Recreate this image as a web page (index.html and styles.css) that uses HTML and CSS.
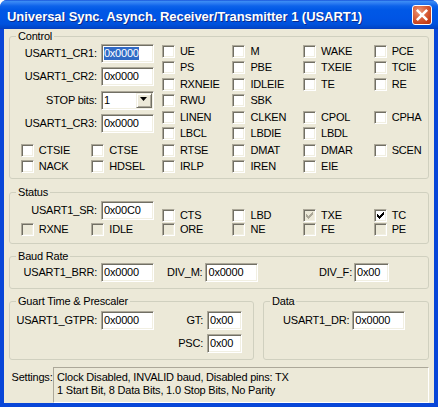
FILE: index.html
```html
<!DOCTYPE html>
<html>
<head>
<meta charset="utf-8">
<title>USART1</title>
<link rel="stylesheet" href="styles.css">
</head>
<body>
<div class="window">
  <div class="titlebar">
    <div class="title">Universal Sync. Asynch. Receiver/Transmitter 1 (USART1)</div>
    <div class="close"><svg width="20" height="20" viewBox="0 0 20 20"><path d="M5.8 5.8L14.2 14.2M14.2 5.8L5.8 14.2" stroke="#fff" stroke-width="2.6" stroke-linecap="square"/></svg></div>
  </div>
  <div class="client">
    <fieldset class="group control">
      <legend>Control</legend>
      <div class="cgrid">
        <div class="regs">
          <div class="reg"><span class="lbl">USART1_CR1:</span><span class="edit"><span class="sel">0x0000</span></span></div>
          <div class="reg"><span class="lbl">USART1_CR2:</span><span class="edit">0x0000</span></div>
          <div class="reg"><span class="lbl">STOP bits:</span><span class="edit combo"><span>1</span><span class="dd"><svg width="7" height="4" viewBox="0 0 7 4"><path d="M0 0h7L3.5 4z" fill="#000"/></svg></span></span></div>
          <div class="reg"><span class="lbl">USART1_CR3:</span><span class="edit">0x0000</span></div>
        </div>
        <div class="chk"><span class="cb"></span>UE</div>
        <div class="chk"><span class="cb"></span>M</div>
        <div class="chk"><span class="cb"></span>WAKE</div>
        <div class="chk"><span class="cb"></span>PCE</div>
        <div class="chk"><span class="cb"></span>PS</div>
        <div class="chk"><span class="cb"></span>PBE</div>
        <div class="chk"><span class="cb"></span>TXEIE</div>
        <div class="chk"><span class="cb"></span>TCIE</div>
        <div class="chk"><span class="cb"></span>RXNEIE</div>
        <div class="chk"><span class="cb"></span>IDLEIE</div>
        <div class="chk"><span class="cb"></span>TE</div>
        <div class="chk"><span class="cb"></span>RE</div>
        <div class="chk"><span class="cb"></span>RWU</div>
        <div class="chk"><span class="cb"></span>SBK</div>
        <div></div>
        <div></div>
        <div class="chk"><span class="cb"></span>LINEN</div>
        <div class="chk"><span class="cb"></span>CLKEN</div>
        <div class="chk"><span class="cb"></span>CPOL</div>
        <div class="chk"><span class="cb"></span>CPHA</div>
        <div class="chk"><span class="cb"></span>LBCL</div>
        <div class="chk"><span class="cb"></span>LBDIE</div>
        <div class="chk"><span class="cb"></span>LBDL</div>
        <div></div>
        <div class="chk"><span class="cb"></span>CTSIE</div>
        <div class="chk"><span class="cb"></span>CTSE</div>
        <div class="chk"><span class="cb"></span>RTSE</div>
        <div class="chk"><span class="cb"></span>DMAT</div>
        <div class="chk"><span class="cb"></span>DMAR</div>
        <div class="chk"><span class="cb"></span>SCEN</div>
        <div class="chk"><span class="cb"></span>NACK</div>
        <div class="chk"><span class="cb"></span>HDSEL</div>
        <div class="chk"><span class="cb"></span>IRLP</div>
        <div class="chk"><span class="cb"></span>IREN</div>
        <div class="chk"><span class="cb"></span>EIE</div>
      </div>
    </fieldset>

    <fieldset class="group status">
      <legend>Status</legend>
      <div class="sgrid">
        <div class="sreg"><span class="lbl">USART1_SR:</span><span class="edit">0x00C0</span></div>
        <div class="chk top"><span class="cb"></span>CTS</div>
        <div class="chk top"><span class="cb"></span>LBD</div>
        <div class="chk top"><span class="cb dis"><svg class="tick grey" width="7" height="7" viewBox="0 0 7 7"><path d="M6 0h1v1h-1zM5 1h2v1h-2zM0 2h1v1h-1zM4 2h3v1h-3zM0 3h2v1h-2zM3 3h3v1h-3zM0 4h5v1h-5zM1 5h3v1h-3zM2 6h1v1h-1z"/></svg></span>TXE</div>
        <div class="chk top"><span class="cb"><svg class="tick" width="7" height="7" viewBox="0 0 7 7"><path d="M6 0h1v1h-1zM5 1h2v1h-2zM0 2h1v1h-1zM4 2h3v1h-3zM0 3h2v1h-2zM3 3h3v1h-3zM0 4h5v1h-5zM1 5h3v1h-3zM2 6h1v1h-1z"/></svg></span>TC</div>
        <div class="chk"><span class="cb dis"></span>RXNE</div>
        <div class="chk"><span class="cb dis"></span>IDLE</div>
        <div class="chk"><span class="cb dis"></span>ORE</div>
        <div class="chk"><span class="cb dis"></span>NE</div>
        <div class="chk"><span class="cb dis"></span>FE</div>
        <div class="chk"><span class="cb dis"></span>PE</div>
      </div>
    </fieldset>

    <fieldset class="group baud">
      <legend>Baud Rate</legend>
      <div class="bbody">
        <span class="lbl wide">USART1_BRR:</span><span class="edit">0x0000</span>
        <span class="lbl divm">DIV_M:</span><span class="edit">0x0000</span>
        <span class="lbl divf">DIV_F:</span><span class="edit narrow">0x00</span>
      </div>
    </fieldset>

    <div class="pair">
      <fieldset class="group guart">
        <legend>Guart Time &amp; Prescaler</legend>
        <div class="ggrid">
          <span class="glbl">USART1_GTPR:</span><span class="edit">0x0000</span>
          <span class="glbl">GT:</span><span class="edit narrow">0x00</span>
          <span></span><span></span>
          <span class="glbl">PSC:</span><span class="edit narrow">0x00</span>
        </div>
      </fieldset>
      <fieldset class="group data">
        <legend>Data</legend>
        <div class="dbody"><span class="lbl">USART1_DR:</span><span class="edit">0x0000</span></div>
      </fieldset>
    </div>

    <div class="settings">
      <div class="slbl">Settings:</div>
      <div class="sbox">Clock Disabled, INVALID baud, Disabled pins: TX<br>1 Start Bit, 8 Data Bits, 1.0 Stop Bits, No Parity</div>
    </div>
  </div>
</div>
</body>
</html>
```

FILE: styles.css
```css
* { box-sizing: border-box; }
html, body { margin: 0; padding: 0; background: #ffffff; }
body {
  font-family: "Liberation Sans", Arial, sans-serif;
  font-size: 11px;
  line-height: 13px;
  letter-spacing: -0.2px;
  color: #000;
}
.window {
  width: 438px;
  height: 407px;
  display: flex;
  flex-direction: column;
  background: #0846d8;
  border-radius: 7px 7px 0 0;
  overflow: hidden;
}
.titlebar {
  flex: none;
  height: 29px;
  display: flex;
  align-items: flex-start;
  background: linear-gradient(to bottom, #0a3dd0 0px, #3d8ff5 1px, #2f7ef2 3px, #0d63ea 6px, #0058e6 10px, #0055e5 18px, #0052dd 24px, #0045c8 28px, #0a3bb8 29px);
}
.title {
  flex: 1;
  padding: 9px 0 0 7px;
  font-size: 13px;
  line-height: 15px;
  font-weight: bold;
  letter-spacing: -0.05px;
  color: #fff;
  text-shadow: 1px 1px 0 #0a2a8c;
  white-space: nowrap;
}
.close {
  flex: none;
  width: 20px;
  height: 20px;
  margin: 5px 6px 0 0;
  border: 1px solid #fff;
  border-radius: 3px;
  background: radial-gradient(circle at 35% 30%, #ec9a7c 0%, #dd6a45 35%, #c8401a 75%, #b83510 100%);
  display: flex;
  align-items: center;
  justify-content: center;
}
.close svg { display: block; margin: -1px; }
.client {
  flex: 1;
  margin: 0 4px 4px 4px;
  padding: 1px 5px 0 5px;
  background: #ece9d8;
  overflow: hidden;
}
.group {
  margin: 0;
  padding: 0;
  min-width: 0;
  border: 1px solid #d0d0bf;
  border-radius: 3px;
}
.group > legend {
  margin-left: 6px;
  padding: 0 2px;
  line-height: 13px;
}
.chk {
  display: flex;
  align-items: center;
  gap: 5px;
  white-space: nowrap;
}
.cb {
  flex: none;
  width: 13px;
  height: 13px;
  background: #fff;
  border: 1px solid;
  border-color: #aca899 #ffffff #ffffff #aca899;
  box-shadow: inset 1px 1px 0 #716f64, inset -1px -1px 0 #f1efe2;
  display: flex;
  align-items: center;
  justify-content: center;
}
.cb.dis { background: #ece9d8; }
.tick { display: block; fill: #000; }
.tick.grey { fill: #aca899; }
.edit {
  flex: none;
  display: inline-flex;
  align-items: center;
  width: 53px;
  height: 19px;
  padding-left: 2px;
  background: #fff;
  border: 1px solid;
  border-color: #aca899 #ffffff #ffffff #aca899;
  box-shadow: inset 1px 1px 0 #716f64, inset -1px -1px 0 #f1efe2;
  white-space: nowrap;
}
.edit.narrow { width: 35px; }
.sel {
  display: inline-block;
  background: #316ac5;
  color: #fff;
  line-height: 13px;
}
.combo {
  justify-content: space-between;
}
.dd {
  width: 16px;
  height: 15px;
  margin: 1px;
  background: #ece9d8;
  border: 1px solid;
  border-color: #f1efe2 #716f64 #716f64 #f1efe2;
  box-shadow: inset 1px 1px 0 #fff, inset -1px -1px 0 #aca899;
  display: flex;
  align-items: center;
  justify-content: center;
  padding-bottom: 2px;
}
.dd svg { display: block; }
.lbl { margin-right: 4px; white-space: nowrap; }

/* Control */
.control { margin-top: 0; }
.cgrid {
  display: grid;
  grid-template-columns: repeat(5, 70.6px) 1fr;
  grid-template-rows: repeat(8, 16.43px);
  padding: 0.3px 0 3.5px 10.7px;
}
.regs {
  grid-column: 1 / 3;
  grid-row: 1 / 7;
  display: flex;
  flex-direction: column;
  gap: 4.33px;
  margin-top: 0.7px;
  padding-right: 8px;
}
.reg {
  display: flex;
  justify-content: flex-end;
  align-items: center;
  height: 19px;
}

/* Status */
.status { margin-top: 6.5px; }
.sgrid {
  display: grid;
  grid-template-columns: repeat(5, 70.6px) 1fr;
  grid-template-rows: 21px 16px;
  padding: 2px 0 5px 10.7px;
}
.sreg {
  grid-column: 1 / 3;
  grid-row: 1;
  align-self: start;
  display: flex;
  justify-content: flex-end;
  align-items: center;
  padding-right: 8px;
}
.chk.top { align-self: end; }

/* Baud */
.baud { margin-top: 6px; }
.bbody {
  display: flex;
  align-items: center;
  padding: 0 39px 6px 0;
}
.lbl.wide { width: 87px; text-align: right; }
.lbl.divm { margin-left: 13px; margin-right: 3px; }
.lbl.divf { margin-left: auto; margin-right: 2px; }

/* Guart / Data */
.pair {
  display: flex;
  gap: 9px;
  margin-top: 6px;
}
.guart { width: 245px; flex: none; }
.data { flex: 1; }
.ggrid {
  display: grid;
  grid-template-columns: 87px 53px 1fr 35px;
  grid-auto-rows: 19px;
  column-gap: 4px;
  row-gap: 4px;
  padding: 3px 11px 6px 0;
}
.glbl {
  justify-self: end;
  align-self: center;
  white-space: nowrap;
}
.dbody {
  display: flex;
  align-items: center;
  padding: 3px 0 0 19px;
}
.dbody .lbl { margin-right: 3px; }

/* Settings */
.settings {
  display: flex;
  margin-top: 7px;
  height: 36px;
}
.slbl {
  flex: none;
  width: 44px;
  padding: 4px 0 0 2.5px;
}
.sbox {
  flex: 1;
  border: 1px solid;
  border-color: #aca899 #ffffff #ffffff #aca899;
  padding: 3px 0 0 3px;
  white-space: nowrap;
}
```
